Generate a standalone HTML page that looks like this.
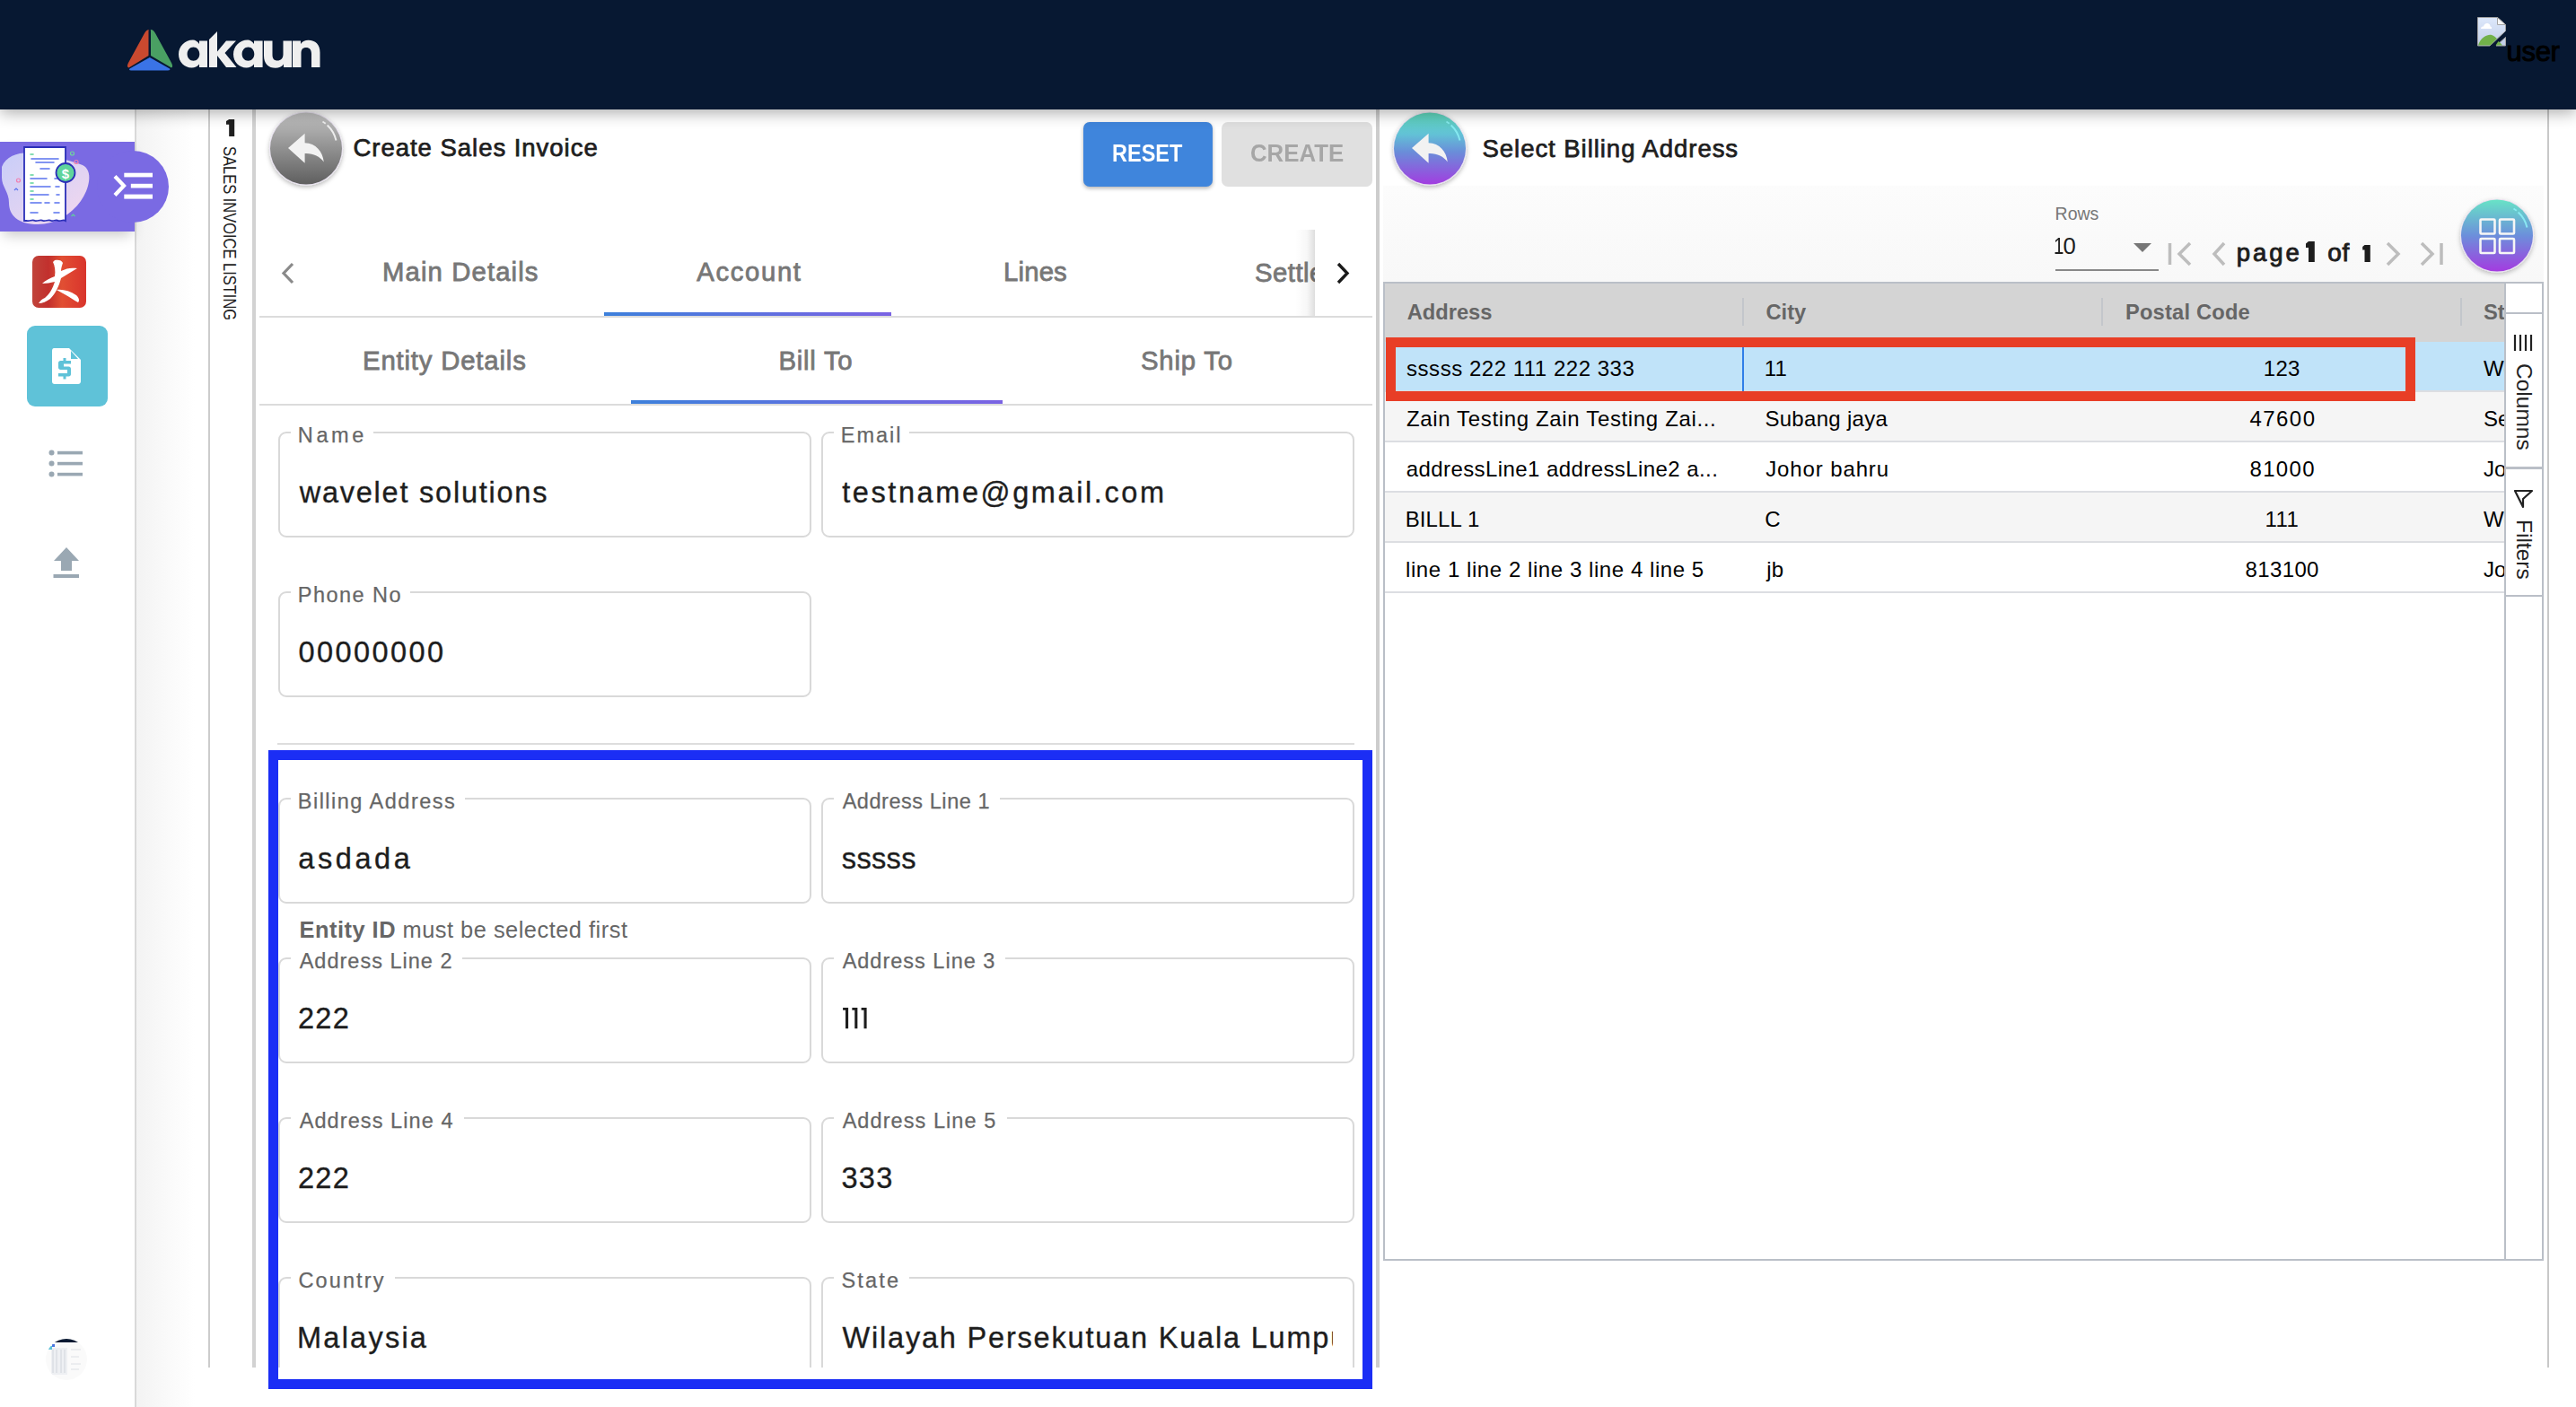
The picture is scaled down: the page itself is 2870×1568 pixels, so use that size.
<!DOCTYPE html>
<html><head><meta charset="utf-8"><style>
html,body{margin:0;padding:0;}
body{width:2870px;height:1568px;position:relative;overflow:hidden;background:#fff;font-family:"Liberation Sans", sans-serif;}
</style></head><body>
<div style="position:absolute;left:0px;top:0px;width:2870px;height:122px;background:#071832;z-index:5;box-shadow:0 4px 16px rgba(0,0,0,0.32);"></div><svg style="position:absolute;left:0;top:0;z-index:6" width="400" height="122" viewBox="0 0 400 122">
<path d="M166.5,33 C164,33 162.5,34.5 161,37 L143,70 C141.5,73 141.5,75 143.5,75.5 L165.5,62 L165.5,35 C165.5,33.5 166,33 166.5,33Z" fill="#c9492f"/>
<path d="M168,33 C170,33 171.5,34.5 173,37 L191,70 C192.5,73 192.5,75 191,75.5 L168,62 L168,35 C168,33.5 167.5,33 168,33Z" fill="#4aa063"/>
<path d="M166.8,64 L189,76.5 C190,77.5 189,78.5 187,78.5 L146,78.5 C144,78.5 143.5,77.5 144.5,76.5 Z" fill="#3a73e6"/>
<g fill="#efefef">
<path d="M215,44.5 C206,44.5 199,51.5 199,60.5 C199,69 205.5,75.5 213.5,75.5 C217,75.5 220,74 222,71.5 L222,75 L231,75 L231,45.5 L222,45.5 L222,49 C220,46 217.5,44.5 215,44.5 Z M215.5,52.5 C219.5,52.5 222.3,56 222.3,60.3 C222.3,64.5 219.5,67.8 215.5,67.8 C211.5,67.8 208.6,64.5 208.6,60.3 C208.6,56 211.5,52.5 215.5,52.5 Z" fill-rule="evenodd"/>
<path d="M233,44 L242,35 L242,57.5 L252,45.5 L263,45.5 L250.5,59 L263.5,75 L252,75 L242,62 L242,75 L233,75 Z"/>
<path d="M276,44.5 C267,44.5 260,51.5 260,60.5 C260,69 266.5,75.5 274.5,75.5 C278,75.5 281,74 283,71.5 L283,75 L292.6,75 L292.6,45.5 L283,45.5 L283,49 C281,46 278.5,44.5 276,44.5 Z M276.5,52.5 C280.5,52.5 283.3,56 283.3,60.3 C283.3,64.5 280.5,67.8 276.5,67.8 C272.5,67.8 269.6,64.5 269.6,60.3 C269.6,56 272.5,52.5 276.5,52.5 Z" fill-rule="evenodd"/>
<path d="M294,45.5 L303.5,45.5 L303.5,61 C303.5,65.5 305.5,67.5 309,67.5 C312.8,67.5 315.5,65 315.5,60.5 L315.5,45.5 L325,45.5 L325,75 L316,75 L316,71.5 C314,74.5 310.5,75.8 307,75.8 C299,75.8 294,71 294,62 Z"/>
<path d="M326,75 L335.5,75 L335.5,59.5 C335.5,55 337.5,53 341,53 C344.8,53 347,55.5 347,60 L347,75 L356.5,75 L356.5,58.5 C356.5,49.5 351.5,44.7 343.5,44.7 C340,44.7 337,46 335,49 L335,45.5 L326,45.5 Z"/>
</g></svg><svg style="position:absolute;left:2760px;top:19px;z-index:6" width="33" height="33" viewBox="0 0 33 33">
<defs><linearGradient id="bi" x1="0" y1="0" x2="0" y2="1"><stop offset="0" stop-color="#dde8fb"/><stop offset="1" stop-color="#c3cfe8"/></linearGradient></defs>
<path d="M0.5,0.5 L22.5,0.5 L31.5,8.5 L31.5,15.5 L14,32 L0.5,32Z" fill="url(#bi)" stroke="#a4a4a4" stroke-width="1"/>
<path d="M31.5,22.5 L31.5,32 L21,32 Z" fill="#c3cfe8" stroke="#a4a4a4" stroke-width="1"/>
<path d="M22.5,0.5 L22.5,8.5 L31.5,8.5Z" fill="#f6f6f6" stroke="#a4a4a4" stroke-width="1"/>
<path d="M1,31.5 C4,22 12,19 16,20 C18.5,21 20.5,22.5 22,24 L14.5,31.5Z" fill="#72b14a"/>
<path d="M23.5,27 C25.5,28.5 27,30 28,31.5 L20.5,31.5Z" fill="#72b14a"/>
<path d="M4,13 C4,11 5.5,10.5 7,10.5 C7.5,8 9.5,6.5 11.5,7 C13.5,7.3 14.5,9 14.5,10.5 C16,10.5 16.3,12 16,13 Z" fill="#fff"/>
</svg><div style="position:absolute;left:2792.5px;top:42.06px;font-size:31px;line-height:31px;color:#000;font-weight:400;letter-spacing:-0.292px;white-space:nowrap;z-index:6;-webkit-text-stroke:1.0px #000;">user</div><div style="position:absolute;left:0px;top:122px;width:150px;height:1446px;background:#fff;"></div><div style="position:absolute;left:150px;top:122px;width:2px;height:1446px;background:#d9d9d9;"></div><div style="position:absolute;left:152px;top:122px;width:81px;height:1446px;background:linear-gradient(to right,#f3f3f3,#fafafa 45%,#fff 80%);"></div><div style="position:absolute;left:232px;top:122px;width:2px;height:1402px;background:#cccccc;"></div><div style="position:absolute;left:234px;top:122px;width:47px;height:1402px;background:#fff;"></div><div style="position:absolute;left:281px;top:122px;width:4px;height:1402px;background:#d2d2d2;"></div><div style="position:absolute;left:0px;top:158px;width:150px;height:100px;background:#7a6ae3;box-shadow:0 8px 14px -4px rgba(0,0,0,0.22);z-index:2;"></div><div style="position:absolute;left:108px;top:168px;width:80px;height:80px;border-radius:50%;background:#7a6ae3;z-index:2;"></div><svg style="position:absolute;left:0;top:158px;z-index:3" width="150" height="100" viewBox="0 0 150 100">
<defs><linearGradient id="blob" x1="0" y1="0" x2="1" y2="1"><stop offset="0" stop-color="#c8cdf8"/><stop offset="1" stop-color="#f4d8ee"/></linearGradient></defs>
<path d="M2,28 C8,12 30,10 45,14 C60,18 78,20 92,26 C104,32 100,52 90,66 C80,80 62,92 42,92 C20,92 10,82 10,68 C10,56 2,50 2,40 Z" fill="url(#blob)"/>
<path d="M27,6 L73,6 L73,88 C70,86 68,89 65,88 C62,86 60,89 57,88 C54,86 51,89 48,88 C45,86 42,89 39,88 C36,86 33,89 30,88 L27,88 Z" fill="#fff" stroke="#2b2fb8" stroke-width="1.8"/>
<g stroke-width="1.6" stroke-linecap="round">
<path d="M34,14 L37,14 M34,37 L37,37 M34,46 L37,46 M34,55 L37,55 M34,64 L37,64" stroke="#5fd39a"/>
<path d="M35,19 L65,19 M40,23 L60,23 M45,30 L55,30 M34,41 L52,41 M34,50 L56,50 M34,59 L54,59 M34,68 L46,68 M50,68 L55,68 M61,68 L66,68 M34,79 L42,79 M60,79 L66,79 M61,41 L66,41 M62,50 L66,50 M63,59 L66,59" stroke="#5a73ee"/>
</g>
<circle cx="73" cy="34.5" r="10.5" fill="#5fd49c" stroke="#2b2fb8" stroke-width="1.8"/>
<text x="73" y="40.5" font-family="Liberation Sans" font-weight="700" font-size="15" fill="#fff" text-anchor="middle">$</text>
<circle cx="80.5" cy="13" r="2" fill="none" stroke="#6fd59e" stroke-width="1.2"/>
<circle cx="85" cy="22.5" r="2" fill="none" stroke="#f07fb0" stroke-width="1.2"/>
<circle cx="20.5" cy="43" r="2" fill="none" stroke="#f07fb0" stroke-width="1.2"/>
<path d="M16,54 L18,52 L20,54" stroke="#5a73ee" stroke-width="1.2" fill="none"/>
<path d="M79.5,83 L81.5,81 L83.5,83" stroke="#5fd39a" stroke-width="1.2" fill="none"/>
</svg><svg style="position:absolute;left:120px;top:185px;z-index:3" width="56" height="42" viewBox="0 0 56 42">
<path d="M8,11.5 L18,22 L8,32.5" stroke="#fff" stroke-width="4.2" fill="none"/>
<rect x="18.3" y="7.7" width="31.7" height="4.7" fill="#fff"/>
<rect x="25.8" y="19.8" width="24.2" height="4.7" fill="#fff"/>
<rect x="18.3" y="31.6" width="31.7" height="5" fill="#fff"/>
</svg><svg style="position:absolute;left:36px;top:285px;" width="60" height="58" viewBox="0 0 60 58">
<defs><linearGradient id="rg" x1="0" x2="1" y1="0" y2="0"><stop offset="0" stop-color="#c0433a"/><stop offset="0.3" stop-color="#c2302d"/><stop offset="0.55" stop-color="#e14f33"/><stop offset="0.8" stop-color="#dd3f2f"/><stop offset="1" stop-color="#d8352c"/></linearGradient></defs>
<rect x="0" y="0" width="60" height="58" rx="7" fill="url(#rg)"/>
<path d="M25,5 C29,4 33,5 34,8 C33,11 32,14 32,17 C38,14 43,13 50,14 C44,18 38,21 32,25 C30,33 26,42 20,48 C16,51 11,53 7,53 C9,50 11,48 14,47 C19,43 23,36 25,29 C20,30 16,31 11,31 C14,28 19,25 25,23 C26,17 25,11 23,7 Z" fill="#fff"/>
<path d="M27,38 C33,37 42,39 49,44 C52,47 53,50 51,52 C47,50 42,46 36,43 C33,41 30,40 27,38 Z" fill="#fff"/>
</svg><div style="position:absolute;left:30px;top:363px;width:90px;height:90px;background:#5fc2d8;border-radius:9px;"></div><svg style="position:absolute;left:57px;top:387px;" width="34" height="42" viewBox="0 0 34 42">
<path d="M3,1 L20,1 L33,14 L33,38 C33,40 31.5,41 30,41 L4,41 C2,41 1,40 1,38 L1,4 C1,2 2,1 3,1Z" fill="#fff"/>
<path d="M22,4 L30,13 L22,13Z" fill="#5fc2d8"/>
<path d="M13.5,12 L16.5,12 L16.5,15 L22,15 L22,18.5 L14,18.5 L14,21.5 L19.5,21.5 C21,21.5 22,22.5 22,24 L22,30 C22,31.5 21,32.5 19.5,32.5 L16.5,32.5 L16.5,35.5 L13.5,35.5 L13.5,32.5 L8,32.5 L8,29 L18,29 L18,25 L10.5,25 C9,25 8,24 8,22.5 L8,17.5 C8,16 9,15 10.5,15 L13.5,15Z" fill="#5fc2d8"/>
</svg><svg style="position:absolute;left:54px;top:500px;" width="40" height="34" viewBox="0 0 40 34">
<circle cx="3.5" cy="4.5" r="3" fill="#9aa8b3"/><circle cx="3.5" cy="16.5" r="3" fill="#9aa8b3"/><circle cx="3.5" cy="28.5" r="3" fill="#9aa8b3"/>
<rect x="10" y="2.8" width="28" height="3.6" fill="#9aa8b3"/><rect x="10" y="14.8" width="28" height="3.6" fill="#9aa8b3"/><rect x="10" y="26.8" width="28" height="3.6" fill="#9aa8b3"/>
</svg><svg style="position:absolute;left:58px;top:609px;" width="32" height="37" viewBox="0 0 32 37">
<path d="M16,1 L30,16 L22,16 L22,27 L10,27 L10,16 L2,16 Z" fill="#9aa8b3"/>
<rect x="1.5" y="31" width="28.5" height="4" fill="#9aa8b3"/>
</svg><svg style="position:absolute;left:50px;top:1490px;" width="50" height="50" viewBox="0 0 50 50">
<defs><clipPath id="cc"><circle cx="24" cy="25" r="23"/></clipPath></defs>
<g clip-path="url(#cc)"><rect width="50" height="50" fill="#fafafa"/><rect x="0" y="0" width="50" height="6" fill="#0b1a33"/>
<rect x="7" y="12" width="18" height="30" fill="#eef0f3"/><path d="M9,14 L9,40 M13,14 L13,40 M18,14 L18,40 M22,14 L22,40" stroke="#c9ced6" stroke-width="0.8"/>
<rect x="4" y="10" width="4" height="4" fill="#5fc2d8"/><rect x="8" y="8" width="3" height="3" fill="#4a74e0"/>
<path d="M29,14 L40,14 M29,22 L38,22 M29,30 L40,30 M29,36 L38,36" stroke="#d5d9df" stroke-width="0.8"/></g>
</svg><svg style="position:absolute;left:251px;top:132px;" width="12" height="21" viewBox="0 0 12 21"><path d="M4.2,1 L10.2,1 L10.2,20 L4.2,20 L4.2,6.8 L1,6.8 L1,3 Z" fill="#1f1f1f"/></svg><div style="position:absolute;left:248px;top:163px;width:193px;height:15px;transform-origin:0 0;transform:translate(15px,0) rotate(90deg) scaleX(0.845);font-size:19.5px;line-height:15px;color:#222;white-space:nowrap;letter-spacing:0px;">SALES INVOICE LISTING</div><div style="position:absolute;left:285px;top:122px;width:1248px;height:1402px;background:#fff;"></div><div style="position:absolute;left:1533px;top:122px;width:4px;height:1402px;background:#cdcdcd;"></div><div style="position:absolute;left:1537px;top:122px;width:1301px;height:1402px;background:#fff;"></div><div style="position:absolute;left:2838px;top:122px;width:2px;height:1402px;background:#c8c8c8;"></div><svg style="position:absolute;left:300px;top:123.8px;z-index:2;overflow:visible" width="82" height="83" viewBox="0 0 82 83">
<defs><linearGradient id="g1" x1="0" y1="0" x2="0" y2="1"><stop offset="0" stop-color="#c2c2c2"/><stop offset="1" stop-color="#5f5f5f"/></linearGradient>
<filter id="g1f" x="-20%" y="-20%" width="140%" height="150%"><feDropShadow dx="0" dy="2" stdDeviation="2.5" flood-color="#000" flood-opacity="0.28"/></filter></defs>
<circle cx="41" cy="41.5" r="41" fill="#e9e3f0" filter="url(#g1f)"/>
<circle cx="41" cy="41.5" r="40" fill="url(#g1)"/>
<path d="M39.6,24.7 L21,41 L39.6,57.8 L39.6,47 C48.5,46.5 56,50 60.8,56.4 C59.5,45 52,35.5 39.6,35.2 Z" fill="#f2f2f2"/>
<path d="M59.5,11.5 A34,34 0 0 1 74.5,32.5" stroke="#fff" stroke-opacity="0.8" stroke-width="2" fill="none" stroke-dasharray="4 2.5 30"/>
</svg><div style="position:absolute;left:393.5px;top:151.22px;font-size:27.5px;line-height:27.5px;color:#1e1e1e;font-weight:400;letter-spacing:0.97px;white-space:nowrap;-webkit-text-stroke:0.75px #1e1e1e;">Create Sales Invoice</div><div style="position:absolute;left:1207px;top:136px;width:144px;height:72px;background:#3f85dc;border-radius:7px;box-shadow:0 2px 4px rgba(0,0,0,0.3);"></div><div style="position:absolute;left:1238.5px;top:158.14px;font-size:27px;line-height:27px;color:#fff;font-weight:700;letter-spacing:0px;white-space:nowrap;transform:scaleX(0.87);transform-origin:0 0;">RESET</div><div style="position:absolute;left:1361px;top:136px;width:168px;height:72px;background:#e0e0e0;border-radius:7px;"></div><div style="position:absolute;left:1392.5px;top:158.14px;font-size:27px;line-height:27px;color:#a6a6a6;font-weight:700;letter-spacing:0px;white-space:nowrap;transform:scaleX(0.955);transform-origin:0 0;">CREATE</div><div style="position:absolute;left:289px;top:352px;width:1240px;height:2px;background:#dcdcdc;"></div><svg style="position:absolute;left:310px;top:290px;" width="22" height="30" viewBox="0 0 22 30"><path d="M16,4 L6,14.5 L16,25" stroke="#8a8a8a" stroke-width="3.2" fill="none"/></svg><div style="position:absolute;left:426.025px;top:288.20px;font-size:29.3px;line-height:29.3px;color:#777;font-weight:400;letter-spacing:1.118px;white-space:nowrap;-webkit-text-stroke:0.8px #777;">Main Details</div><div style="position:absolute;left:776.275px;top:288.20px;font-size:29.3px;line-height:29.3px;color:#777;font-weight:400;letter-spacing:1.638px;white-space:nowrap;-webkit-text-stroke:0.8px #777;">Account</div><div style="position:absolute;left:1118.025px;top:288.20px;font-size:29.3px;line-height:29.3px;color:#777;font-weight:400;letter-spacing:0.175px;white-space:nowrap;-webkit-text-stroke:0.8px #777;">Lines</div><div style="position:absolute;left:1398px;top:256px;width:67px;height:96px;overflow:hidden;"><div style="position:absolute;left:0;top:33.20px;font-size:29.3px;line-height:29.3px;color:#777;letter-spacing:0.5px;white-space:nowrap;-webkit-text-stroke:0.8px #777;">Settlement</div></div><div style="position:absolute;left:1443px;top:256px;width:22px;height:96px;background:linear-gradient(to right,rgba(0,0,0,0),rgba(0,0,0,0.03) 60%,rgba(0,0,0,0.13));"></div><div style="position:absolute;left:1465px;top:256px;width:64px;height:96px;background:#fff;"></div><svg style="position:absolute;left:1485px;top:290px;" width="24" height="30" viewBox="0 0 24 30"><path d="M6,4 L16,14.5 L6,25" stroke="#1a1a1a" stroke-width="3.4" fill="none"/></svg><div style="position:absolute;left:673px;top:348px;width:320px;height:4px;background:linear-gradient(to right,#3d80db,#7a63e3);"></div><div style="position:absolute;left:289px;top:450px;width:1240px;height:2px;background:#dcdcdc;"></div><div style="position:absolute;left:404.025px;top:387.20px;font-size:29.3px;line-height:29.3px;color:#777;font-weight:400;letter-spacing:0.833px;white-space:nowrap;-webkit-text-stroke:0.8px #777;">Entity Details</div><div style="position:absolute;left:867.525px;top:386.70px;font-size:29.3px;line-height:29.3px;color:#777;font-weight:400;letter-spacing:0.754px;white-space:nowrap;-webkit-text-stroke:0.8px #777;">Bill To</div><div style="position:absolute;left:1271.025px;top:386.70px;font-size:29.3px;line-height:29.3px;color:#777;font-weight:400;letter-spacing:0.804px;white-space:nowrap;-webkit-text-stroke:0.8px #777;">Ship To</div><div style="position:absolute;left:703px;top:446px;width:414px;height:4px;background:linear-gradient(to right,#3d80db,#7a63e3);"></div><div style="position:absolute;left:309.5px;top:480.5px;width:590px;height:114px;border:2px solid #d9d9d9;border-radius:9px;"></div><div style="position:absolute;left:323.5px;top:478.5px;width:92px;height:6px;background:#fff;"></div><div style="position:absolute;left:331.75px;top:474.11px;font-size:23.5px;line-height:23.5px;color:#666;font-weight:400;letter-spacing:3.667px;white-space:nowrap;-webkit-text-stroke:0.25px #666;">Name</div><div style="position:absolute;left:329.5px;top:500.5px;width:550px;height:80px;overflow:hidden;"><div style="position:absolute;left:4.175px;top:32.49px;font-size:32.5px;line-height:32.5px;color:#1d1d1d;font-weight:400;letter-spacing:1.767px;white-space:nowrap;-webkit-text-stroke:0.35px #1d1d1d;">wavelet solutions</div></div><div style="position:absolute;left:914.5px;top:480.5px;width:590px;height:114px;border:2px solid #d9d9d9;border-radius:9px;"></div><div style="position:absolute;left:928.5px;top:478.5px;width:84px;height:6px;background:#fff;"></div><div style="position:absolute;left:936.75px;top:474.11px;font-size:23.5px;line-height:23.5px;color:#666;font-weight:400;letter-spacing:2.0px;white-space:nowrap;-webkit-text-stroke:0.25px #666;">Email</div><div style="position:absolute;left:934.5px;top:500.5px;width:550px;height:80px;overflow:hidden;"><div style="position:absolute;left:3.675px;top:32.49px;font-size:32.5px;line-height:32.5px;color:#1d1d1d;font-weight:400;letter-spacing:2.59px;white-space:nowrap;-webkit-text-stroke:0.35px #1d1d1d;">testname@gmail.com</div></div><div style="position:absolute;left:309.5px;top:658.5px;width:590px;height:114px;border:2px solid #d9d9d9;border-radius:9px;"></div><div style="position:absolute;left:323.5px;top:656.5px;width:133px;height:6px;background:#fff;"></div><div style="position:absolute;left:331.75px;top:652.11px;font-size:23.5px;line-height:23.5px;color:#666;font-weight:400;letter-spacing:1.471px;white-space:nowrap;-webkit-text-stroke:0.25px #666;">Phone No</div><div style="position:absolute;left:329.5px;top:678.5px;width:550px;height:80px;overflow:hidden;"><div style="position:absolute;left:2.925px;top:32.49px;font-size:32.5px;line-height:32.5px;color:#1d1d1d;font-weight:400;letter-spacing:2.432px;white-space:nowrap;-webkit-text-stroke:0.35px #1d1d1d;">00000000</div></div><div style="position:absolute;left:309px;top:828px;width:1200px;height:2px;background:#dddddd;"></div><div style="position:absolute;left:285px;top:830px;width:1248px;height:694px;overflow:hidden;"><div style="position:absolute;left:24.5px;top:58.5px;width:590px;height:114px;border:2px solid #d9d9d9;border-radius:9px;"></div><div style="position:absolute;left:38.5px;top:56.5px;width:194px;height:6px;background:#fff;"></div><div style="position:absolute;left:46.75px;top:52.11px;font-size:23.5px;line-height:23.5px;color:#666;font-weight:400;letter-spacing:1.491px;white-space:nowrap;-webkit-text-stroke:0.25px #666;">Billing Address</div><div style="position:absolute;left:44.5px;top:78.5px;width:550px;height:80px;overflow:hidden;"><div style="position:absolute;left:2.8px;top:32.49px;font-size:32.5px;line-height:32.5px;color:#1d1d1d;font-weight:400;letter-spacing:3.58px;white-space:nowrap;-webkit-text-stroke:0.35px #1d1d1d;">asdada</div></div><div style="position:absolute;left:629.5px;top:58.5px;width:590px;height:114px;border:2px solid #d9d9d9;border-radius:9px;"></div><div style="position:absolute;left:643.5px;top:56.5px;width:185px;height:6px;background:#fff;"></div><div style="position:absolute;left:653.625px;top:52.11px;font-size:23.5px;line-height:23.5px;color:#666;font-weight:400;letter-spacing:0.548px;white-space:nowrap;-webkit-text-stroke:0.25px #666;">Address Line 1</div><div style="position:absolute;left:649.5px;top:78.5px;width:550px;height:80px;overflow:hidden;"><div style="position:absolute;left:3.3px;top:32.49px;font-size:32.5px;line-height:32.5px;color:#1d1d1d;font-weight:400;letter-spacing:0.35px;white-space:nowrap;-webkit-text-stroke:0.35px #1d1d1d;">sssss</div></div><div style="position:absolute;left:48.5px;top:194.00px;font-size:25.4px;line-height:25.4px;color:#666;font-weight:400;letter-spacing:0.5px;white-space:nowrap;"><b>Entity ID</b> must be selected first</div><div style="position:absolute;left:24.5px;top:236.5px;width:590px;height:114px;border:2px solid #d9d9d9;border-radius:9px;"></div><div style="position:absolute;left:38.5px;top:234.5px;width:191px;height:6px;background:#fff;"></div><div style="position:absolute;left:48.625px;top:230.11px;font-size:23.5px;line-height:23.5px;color:#666;font-weight:400;letter-spacing:1.01px;white-space:nowrap;-webkit-text-stroke:0.25px #666;">Address Line 2</div><div style="position:absolute;left:44.5px;top:256.5px;width:550px;height:80px;overflow:hidden;"><div style="position:absolute;left:2.55px;top:32.49px;font-size:32.5px;line-height:32.5px;color:#1d1d1d;font-weight:400;letter-spacing:1.225px;white-space:nowrap;-webkit-text-stroke:0.35px #1d1d1d;">222</div></div><div style="position:absolute;left:629.5px;top:236.5px;width:590px;height:114px;border:2px solid #d9d9d9;border-radius:9px;"></div><div style="position:absolute;left:643.5px;top:234.5px;width:191px;height:6px;background:#fff;"></div><div style="position:absolute;left:653.625px;top:230.11px;font-size:23.5px;line-height:23.5px;color:#666;font-weight:400;letter-spacing:1.0px;white-space:nowrap;-webkit-text-stroke:0.25px #666;">Address Line 3</div><div style="position:absolute;left:649.5px;top:256.5px;width:550px;height:80px;overflow:hidden;"><div style="position:absolute;left:4.175px;top:32.49px;font-size:32.5px;line-height:32.5px;color:#1d1d1d;font-weight:400;letter-spacing:1.8px;white-space:nowrap;-webkit-text-stroke:0.35px #1d1d1d;"></div></div><svg style="position:absolute;left:653px;top:291.5px;" width="32" height="26" viewBox="0 0 32 26"><path d="M1.1,1 L7.1,1 L7.1,24.3 L4.0,24.3 L4.0,3.7 L1.1,3.7 Z" fill="#1d1d1d"/><path d="M11.35,1 L17.35,1 L17.35,24.3 L14.25,24.3 L14.25,3.7 L11.35,3.7 Z" fill="#1d1d1d"/><path d="M21.6,1 L27.6,1 L27.6,24.3 L24.5,24.3 L24.5,3.7 L21.6,3.7 Z" fill="#1d1d1d"/></svg><div style="position:absolute;left:24.5px;top:414.5px;width:590px;height:114px;border:2px solid #d9d9d9;border-radius:9px;"></div><div style="position:absolute;left:38.5px;top:412.5px;width:193px;height:6px;background:#fff;"></div><div style="position:absolute;left:48.625px;top:408.11px;font-size:23.5px;line-height:23.5px;color:#666;font-weight:400;letter-spacing:1.094px;white-space:nowrap;-webkit-text-stroke:0.25px #666;">Address Line 4</div><div style="position:absolute;left:44.5px;top:434.5px;width:550px;height:80px;overflow:hidden;"><div style="position:absolute;left:2.55px;top:32.49px;font-size:32.5px;line-height:32.5px;color:#1d1d1d;font-weight:400;letter-spacing:1.225px;white-space:nowrap;-webkit-text-stroke:0.35px #1d1d1d;">222</div></div><div style="position:absolute;left:629.5px;top:414.5px;width:590px;height:114px;border:2px solid #d9d9d9;border-radius:9px;"></div><div style="position:absolute;left:643.5px;top:412.5px;width:193px;height:6px;background:#fff;"></div><div style="position:absolute;left:653.625px;top:408.11px;font-size:23.5px;line-height:23.5px;color:#666;font-weight:400;letter-spacing:1.067px;white-space:nowrap;-webkit-text-stroke:0.25px #666;">Address Line 5</div><div style="position:absolute;left:649.5px;top:434.5px;width:550px;height:80px;overflow:hidden;"><div style="position:absolute;left:2.925px;top:32.49px;font-size:32.5px;line-height:32.5px;color:#1d1d1d;font-weight:400;letter-spacing:1.325px;white-space:nowrap;-webkit-text-stroke:0.35px #1d1d1d;">333</div></div><div style="position:absolute;left:24.5px;top:592.5px;width:590px;height:114px;border:2px solid #d9d9d9;border-radius:9px;"></div><div style="position:absolute;left:38.5px;top:590.5px;width:116px;height:6px;background:#fff;"></div><div style="position:absolute;left:47.5px;top:586.11px;font-size:23.5px;line-height:23.5px;color:#666;font-weight:400;letter-spacing:2.104px;white-space:nowrap;-webkit-text-stroke:0.25px #666;">Country</div><div style="position:absolute;left:44.5px;top:612.5px;width:550px;height:80px;overflow:hidden;"><div style="position:absolute;left:1.55px;top:32.49px;font-size:32.5px;line-height:32.5px;color:#1d1d1d;font-weight:400;letter-spacing:2.232px;white-space:nowrap;-webkit-text-stroke:0.35px #1d1d1d;">Malaysia</div></div><div style="position:absolute;left:629.5px;top:592.5px;width:590px;height:114px;border:2px solid #d9d9d9;border-radius:9px;"></div><div style="position:absolute;left:643.5px;top:590.5px;width:84px;height:6px;background:#fff;"></div><div style="position:absolute;left:652.5px;top:586.11px;font-size:23.5px;line-height:23.5px;color:#666;font-weight:400;letter-spacing:2.156px;white-space:nowrap;-webkit-text-stroke:0.25px #666;">State</div><div style="position:absolute;left:649.5px;top:612.5px;width:550px;height:80px;overflow:hidden;"><div style="position:absolute;left:4.05px;top:32.49px;font-size:32.5px;line-height:32.5px;color:#1d1d1d;font-weight:400;letter-spacing:1.8px;white-space:nowrap;-webkit-text-stroke:0.35px #1d1d1d;">Wilayah Persekutuan Kuala Lumpur</div></div></div><div style="position:absolute;left:298.5px;top:835.5px;width:1208.5px;height:690.5px;border:11px solid #1b2ef5;z-index:8;"></div><svg style="position:absolute;left:1552px;top:124.3px;z-index:2;overflow:visible" width="82" height="83" viewBox="0 0 82 83">
<defs><linearGradient id="g2" x1="0" y1="0" x2="0" y2="1"><stop offset="0" stop-color="#5dd5b8"/><stop offset="0.3" stop-color="#62c2d6"/><stop offset="0.55" stop-color="#6a8dd9"/><stop offset="1" stop-color="#a23de0"/></linearGradient>
<filter id="g2f" x="-20%" y="-20%" width="140%" height="150%"><feDropShadow dx="0" dy="2" stdDeviation="2.5" flood-color="#000" flood-opacity="0.28"/></filter></defs>
<circle cx="41" cy="41.5" r="41" fill="#e9e3f0" filter="url(#g2f)"/>
<circle cx="41" cy="41.5" r="40" fill="url(#g2)"/>
<path d="M39.6,24.7 L21,41 L39.6,57.8 L39.6,47 C48.5,46.5 56,50 60.8,56.4 C59.5,45 52,35.5 39.6,35.2 Z" fill="#f2f2f2"/>
<path d="M59.5,11.5 A34,34 0 0 1 74.5,32.5" stroke="#8ef2f8" stroke-opacity="0.8" stroke-width="2" fill="none" stroke-dasharray="4 2.5 30"/>
</svg><div style="position:absolute;left:1651.5px;top:151.72px;font-size:27.5px;line-height:27.5px;color:#1e1e1e;font-weight:400;letter-spacing:0.96px;white-space:nowrap;-webkit-text-stroke:0.75px #1e1e1e;">Select Billing Address</div><div style="position:absolute;left:1541px;top:207px;width:1293px;height:107px;background:linear-gradient(to bottom,#fcfcfc,#f8f8f8);"></div><div style="position:absolute;left:2289.6px;top:228.69px;font-size:19.5px;line-height:19.5px;color:#777;font-weight:400;letter-spacing:0px;white-space:nowrap;">Rows</div><div style="position:absolute;left:2287.5px;top:262.24px;font-size:25.7px;line-height:25.7px;color:#1d1d1d;font-weight:400;letter-spacing:0px;white-space:nowrap;transform:scaleX(0.8);transform-origin:0 0;">1</div><div style="position:absolute;left:2298.5px;top:262.24px;font-size:25.7px;line-height:25.7px;color:#1d1d1d;font-weight:400;letter-spacing:0px;white-space:nowrap;">0</div><svg style="position:absolute;left:2376px;top:270px;" width="22" height="12" viewBox="0 0 22 12"><path d="M1,1 L21,1 L11,11Z" fill="#777"/></svg><div style="position:absolute;left:2289.6px;top:300px;width:115px;height:2px;background:#888;"></div><svg style="position:absolute;left:2410px;top:265px;" width="320" height="36" viewBox="0 0 320 36">
<g stroke="#bdbdbd" stroke-width="3.5" fill="none">
<path d="M7.5,6 L7.5,30"/><path d="M30,6 L18,18 L30,30"/>
<path d="M68,6 L57,18 L68,30"/>
<path d="M250,6 L262,18 L250,30"/>
<path d="M288,6 L300,18 L288,30"/><path d="M310,6 L310,30"/>
</g></svg><div style="position:absolute;left:2491.7px;top:268.42px;font-size:27.5px;line-height:27.5px;color:#1d1d1d;font-weight:400;letter-spacing:2.95px;white-space:nowrap;-webkit-text-stroke:0.9px #1d1d1d;">page</div><svg style="position:absolute;left:2568px;top:268px;" width="12" height="25" viewBox="0 0 12 25"><path d="M4,1 L10.8,1 L10.8,24 L4,24 L4,8 L1,8 L1,3.5 Z" fill="#1d1d1d"/></svg><div style="position:absolute;left:2593.325px;top:268.00px;font-size:28px;line-height:28px;color:#1d1d1d;font-weight:400;letter-spacing:0.725px;white-space:nowrap;-webkit-text-stroke:0.9px #1d1d1d;">of</div><svg style="position:absolute;left:2631px;top:272px;" width="12" height="21" viewBox="0 0 12 21"><path d="M3.5,1 L9.8,1 L9.8,20 L3.5,20 L3.5,6.5 L1.2,6.5 L1.2,3 Z" fill="#1d1d1d"/></svg><svg style="position:absolute;left:2741px;top:221px;overflow:visible" width="82" height="82" viewBox="0 0 82 82">
<defs><linearGradient id="g3" x1="0" y1="0" x2="0" y2="1"><stop offset="0" stop-color="#68e3c6"/><stop offset="0.5" stop-color="#6c8fdb"/><stop offset="1" stop-color="#a43be0"/></linearGradient>
<filter id="g3f" x="-20%" y="-20%" width="140%" height="150%"><feDropShadow dx="0" dy="2" stdDeviation="2.5" flood-color="#000" flood-opacity="0.25"/></filter></defs>
<circle cx="41" cy="41.5" r="41" fill="#e9e3f0" filter="url(#g3f)"/>
<circle cx="41" cy="41.5" r="40" fill="url(#g3)"/>
<g fill="none" stroke="#f6f6f6" stroke-width="2.6"><rect x="22.5" y="23.5" width="16" height="16" rx="1"/><rect x="44" y="23.5" width="16" height="16" rx="1"/><rect x="22.5" y="45" width="16" height="16" rx="1"/><rect x="44" y="45" width="16" height="16" rx="1"/></g>
<path d="M59.5,11.5 A34,34 0 0 1 74.5,32.5" stroke="#8ef2f8" stroke-opacity="0.85" stroke-width="2" fill="none" stroke-dasharray="4 2.5 30"/>
</svg><div style="position:absolute;left:1541px;top:314px;width:1288.5px;height:1087px;border:2px solid #babfc7;background:#fff;"></div><div style="position:absolute;left:1543px;top:316px;width:1248px;height:65px;background:#d4d4d4;"></div><div style="position:absolute;left:1941px;top:332px;width:2px;height:31px;background:#c3c6cb;"></div><div style="position:absolute;left:2341px;top:332px;width:2px;height:31px;background:#c3c6cb;"></div><div style="position:absolute;left:2741px;top:332px;width:2px;height:31px;background:#c3c6cb;"></div><div style="position:absolute;left:1567.7px;top:336.94px;font-size:23.7px;line-height:23.7px;color:#666;font-weight:700;letter-spacing:0px;white-space:nowrap;">Address</div><div style="position:absolute;left:1967.5px;top:336.94px;font-size:23.7px;line-height:23.7px;color:#666;font-weight:700;letter-spacing:0px;white-space:nowrap;">City</div><div style="position:absolute;left:2367.9px;top:336.94px;font-size:23.7px;line-height:23.7px;color:#666;font-weight:700;letter-spacing:0.2px;white-space:nowrap;">Postal Code</div><div style="position:absolute;left:2767px;top:320px;width:23px;height:60px;overflow:hidden;"><div style="position:absolute;left:0;top:16.94px;font-size:23.7px;line-height:23.7px;color:#666;font-weight:700;">State</div></div><div style="position:absolute;left:1543px;top:381px;width:1248px;height:56px;background:#c0e3f9;"></div><div style="position:absolute;left:1543px;top:435px;width:1248px;height:2px;background:#dcdee2;"></div><div style="position:absolute;left:1567.075px;top:398.68px;font-size:24px;line-height:24px;color:#000;font-weight:400;letter-spacing:0.525px;white-space:nowrap;">sssss 222 111 222 333</div><div style="position:absolute;left:1965.625px;top:398.68px;font-size:24px;line-height:24px;color:#000;font-weight:400;letter-spacing:0.3px;white-space:nowrap;">11</div><div style="position:absolute;left:2521.825px;top:398.68px;font-size:24px;line-height:24px;color:#000;font-weight:400;letter-spacing:0.238px;white-space:nowrap;">123</div><div style="position:absolute;left:2767px;top:381px;width:23px;height:54px;overflow:hidden;"><div style="position:absolute;left:0;top:17.68px;font-size:24px;line-height:24px;color:#000;white-space:nowrap;">Wohor</div></div><div style="position:absolute;left:1543px;top:437px;width:1248px;height:56px;background:#f5f5f5;"></div><div style="position:absolute;left:1543px;top:491px;width:1248px;height:2px;background:#dcdee2;"></div><div style="position:absolute;left:1566.95px;top:454.68px;font-size:24px;line-height:24px;color:#000;font-weight:400;letter-spacing:0.653px;white-space:nowrap;">Zain Testing Zain Testing Zai...</div><div style="position:absolute;left:1966.375px;top:454.68px;font-size:24px;line-height:24px;color:#000;font-weight:400;letter-spacing:0.312px;white-space:nowrap;">Subang jaya</div><div style="position:absolute;left:2506.5px;top:454.68px;font-size:24px;line-height:24px;color:#000;font-weight:400;letter-spacing:1.438px;white-space:nowrap;">47600</div><div style="position:absolute;left:2767px;top:437px;width:23px;height:54px;overflow:hidden;"><div style="position:absolute;left:0;top:17.68px;font-size:24px;line-height:24px;color:#000;white-space:nowrap;">Seohor</div></div><div style="position:absolute;left:1543px;top:493px;width:1248px;height:56px;background:#ffffff;"></div><div style="position:absolute;left:1543px;top:547px;width:1248px;height:2px;background:#dcdee2;"></div><div style="position:absolute;left:1566.7px;top:510.68px;font-size:24px;line-height:24px;color:#000;font-weight:400;letter-spacing:0.422px;white-space:nowrap;">addressLine1 addressLine2 a...</div><div style="position:absolute;left:1967.125px;top:510.68px;font-size:24px;line-height:24px;color:#000;font-weight:400;letter-spacing:0.888px;white-space:nowrap;">Johor bahru</div><div style="position:absolute;left:2506.5px;top:510.68px;font-size:24px;line-height:24px;color:#000;font-weight:400;letter-spacing:1.312px;white-space:nowrap;">81000</div><div style="position:absolute;left:2767px;top:493px;width:23px;height:54px;overflow:hidden;"><div style="position:absolute;left:0;top:17.68px;font-size:24px;line-height:24px;color:#000;white-space:nowrap;">Joohor</div></div><div style="position:absolute;left:1543px;top:549px;width:1248px;height:56px;background:#f5f5f5;"></div><div style="position:absolute;left:1543px;top:603px;width:1248px;height:2px;background:#dcdee2;"></div><div style="position:absolute;left:1565.7px;top:566.68px;font-size:24px;line-height:24px;color:#000;font-weight:400;letter-spacing:0.125px;white-space:nowrap;">BILLL 1</div><div style="position:absolute;left:1966.25px;top:566.68px;font-size:24px;line-height:24px;color:#000;font-weight:400;letter-spacing:0.3px;white-space:nowrap;">C</div><div style="position:absolute;left:2523.375px;top:566.68px;font-size:24px;line-height:24px;color:#000;font-weight:400;letter-spacing:0.5px;white-space:nowrap;">111</div><div style="position:absolute;left:2767px;top:549px;width:23px;height:54px;overflow:hidden;"><div style="position:absolute;left:0;top:17.68px;font-size:24px;line-height:24px;color:#000;white-space:nowrap;">Wohor</div></div><div style="position:absolute;left:1543px;top:605px;width:1248px;height:56px;background:#ffffff;"></div><div style="position:absolute;left:1543px;top:659px;width:1248px;height:2px;background:#dcdee2;"></div><div style="position:absolute;left:1566.075px;top:622.68px;font-size:24px;line-height:24px;color:#000;font-weight:400;letter-spacing:0.564px;white-space:nowrap;">line 1 line 2 line 3 line 4 line 5</div><div style="position:absolute;left:1968.125px;top:622.68px;font-size:24px;line-height:24px;color:#000;font-weight:400;letter-spacing:0.3px;white-space:nowrap;">jb</div><div style="position:absolute;left:2501.5px;top:622.68px;font-size:24px;line-height:24px;color:#000;font-weight:400;letter-spacing:0.375px;white-space:nowrap;">813100</div><div style="position:absolute;left:2767px;top:605px;width:23px;height:54px;overflow:hidden;"><div style="position:absolute;left:0;top:17.68px;font-size:24px;line-height:24px;color:#000;white-space:nowrap;">Joohor</div></div><div style="position:absolute;left:1941px;top:381px;width:2px;height:56px;background:#2f7ee8;"></div><div style="position:absolute;left:2790px;top:316px;width:2px;height:1087px;background:#babfc7;"></div><div style="position:absolute;left:2792px;top:348px;width:41px;height:2px;background:#babfc7;"></div><div style="position:absolute;left:2792px;top:520px;width:41px;height:3px;background:#babfc7;"></div><div style="position:absolute;left:2792px;top:663px;width:41px;height:2px;background:#babfc7;"></div><svg style="position:absolute;left:2800px;top:372px;" width="24" height="20" viewBox="0 0 24 20"><g stroke="#222" stroke-width="2.2"><path d="M2,1 L2,19 M8,1 L8,19 M14,1 L14,19 M20,1 L20,19"/></g></svg><div style="position:absolute;left:2801px;top:405px;width:96px;height:22px;transform-origin:0 0;transform:translate(22px,0) rotate(90deg);font-size:24.5px;line-height:22px;color:#222;white-space:nowrap;">Columns</div><svg style="position:absolute;left:2800px;top:545px;" width="24" height="22" viewBox="0 0 24 22"><path d="M2,2 L21,2 L11,11 L11,20 Z" stroke="#222" stroke-width="2.2" fill="none" stroke-linejoin="round"/></svg><div style="position:absolute;left:2801px;top:579px;width:68px;height:22px;transform-origin:0 0;transform:translate(22px,0) rotate(90deg);font-size:24.5px;line-height:22px;color:#222;white-space:nowrap;">Filters</div><div style="position:absolute;left:1543.5px;top:375.8px;width:1125.8px;height:49px;border:11px solid #e83e26;z-index:8;"></div>
</body></html>
